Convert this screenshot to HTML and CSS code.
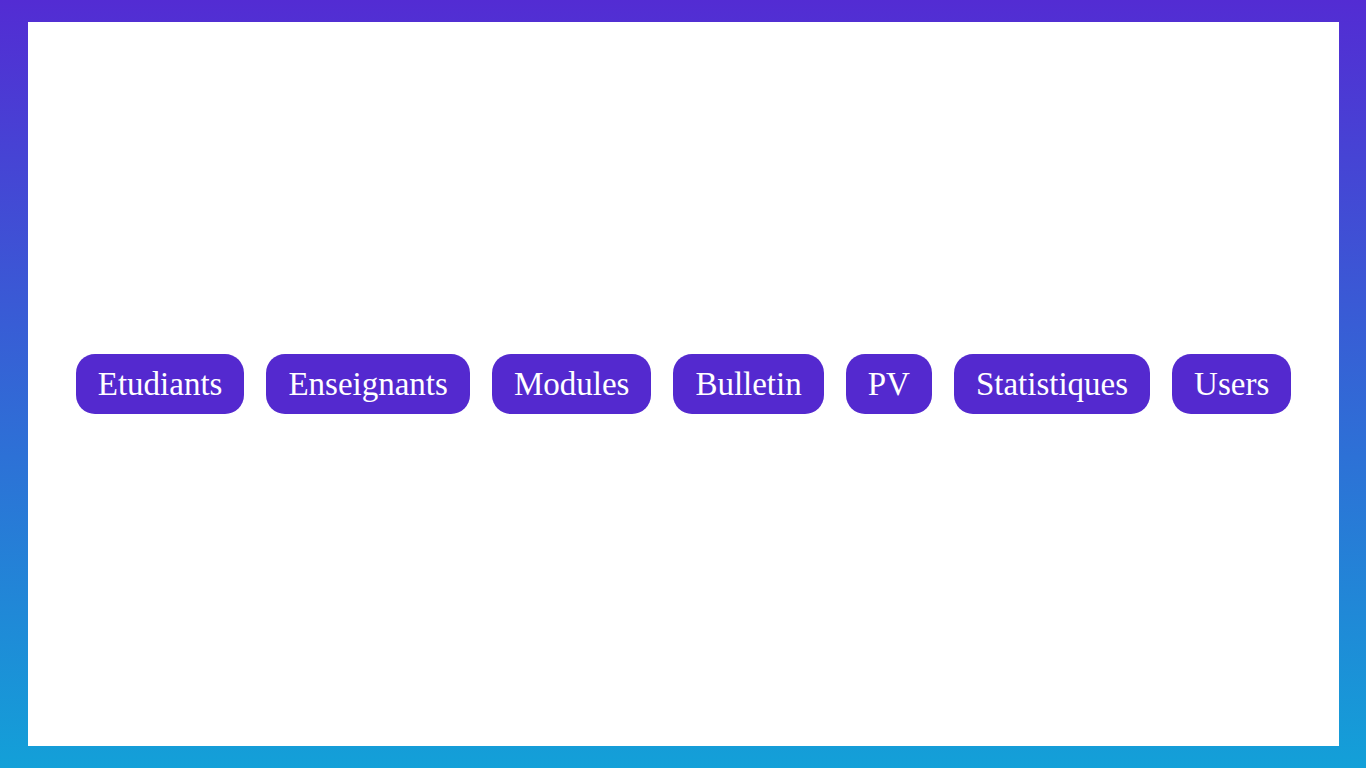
FILE: index.html
```html
<!DOCTYPE html>
<html>
<head>
<meta charset="utf-8">
<link rel="stylesheet" href="styles.css">
</head>
<body>
<div class="frame">
  <nav class="menu">
    <a class="btn" href="#">Etudiants</a>
    <a class="btn" href="#">Enseignants</a>
    <a class="btn" href="#">Modules</a>
    <a class="btn" href="#">Bulletin</a>
    <a class="btn" href="#">PV</a>
    <a class="btn" href="#">Statistiques</a>
    <a class="btn" href="#">Users</a>
  </nav>
</div>
</body>
</html>
```
FILE: styles.css
```css
html, body {
  margin: 0;
  height: 100%;
}
body {
  background: linear-gradient(to bottom, #532cd3 0%, #13a0d8 100%);
  padding: 22px 27px 22px 28px;
  box-sizing: border-box;
  font-family: "Liberation Serif", "Times New Roman", serif;
}
.frame {
  background: #ffffff;
  height: 100%;
  display: flex;
  align-items: center;
  justify-content: center;
}
.menu {
  display: flex;
  gap: 22px;
}
.btn {
  display: block;
  background: #5429cf;
  color: #ffffff;
  text-decoration: none;
  font-size: 33px;
  line-height: 38px;
  padding: 11px 22px;
  border-radius: 19px;
}
```
